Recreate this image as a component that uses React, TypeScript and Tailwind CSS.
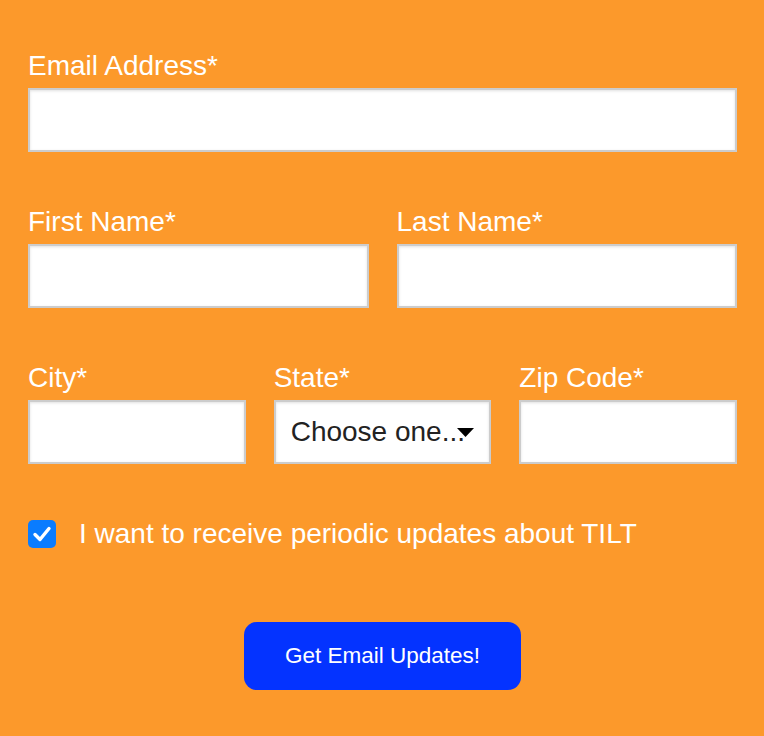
import React from "react";

const inputCls =
  "block w-full h-[64px] bg-white border-2 border-[#cccccc] shadow-[inset_0_1px_3px_rgba(0,0,0,0.12)] outline-none px-4 text-[28px] text-[#222]";

function Field({ label, children }: { label: string; children?: React.ReactNode }) {
  return (
    <div className="flex flex-col min-w-0">
      <label className="text-[28px] leading-[32px] text-white mb-[6px]">{label}</label>
      {children ?? <input className={inputCls} />}
    </div>
  );
}

export default function App() {
  return (
    <div
      className="w-[764px] h-[736px] bg-[#fc992b] pl-[28px] pr-[27px] pt-[50px]"
      style={{ fontFamily: '"Liberation Sans", Arial, sans-serif' }}
    >
      <Field label="Email Address*" />
      <div className="grid grid-cols-2 gap-x-[28px] mt-[54px]">
        <Field label="First Name*" />
        <Field label="Last Name*" />
      </div>
      <div className="grid grid-cols-3 gap-x-[28px] mt-[54px]">
        <Field label="City*" />
        <Field label="State*">
          <div className="relative h-[64px] bg-white border-2 border-[#cccccc] shadow-[inset_0_1px_3px_rgba(0,0,0,0.12)] flex items-center pl-[15px] text-[28px] text-[#222] overflow-hidden whitespace-nowrap">
            Choose one...
            <svg
              className="absolute right-[15px] top-[26px]"
              width="17"
              height="9"
              viewBox="0 0 17 9"
            >
              <polygon points="0,0 17,0 8.5,9" fill="#000" />
            </svg>
          </div>
        </Field>
        <Field label="Zip Code*" />
      </div>
      <div className="flex items-center mt-[56px] h-[28px]">
        <div className="w-[28px] h-[28px] rounded-[5px] bg-[#0a7cff] flex items-center justify-center">
          <svg width="22" height="22" viewBox="0 0 22 22">
            <path
              d="M4 11.5 L9 16.5 L18 5.5"
              fill="none"
              stroke="#fff"
              strokeWidth="3.4"
              strokeLinecap="round"
              strokeLinejoin="round"
            />
          </svg>
        </div>
        <span className="ml-[23px] text-[28px] leading-[32px] text-white">
          I want to receive periodic updates about TILT
        </span>
      </div>
      <div className="flex justify-center mt-[74px]">
        <button className="w-[277px] h-[68px] rounded-[13px] bg-[#0433ff] text-white text-[22.5px]">
          Get Email Updates!
        </button>
      </div>
    </div>
  );
}
